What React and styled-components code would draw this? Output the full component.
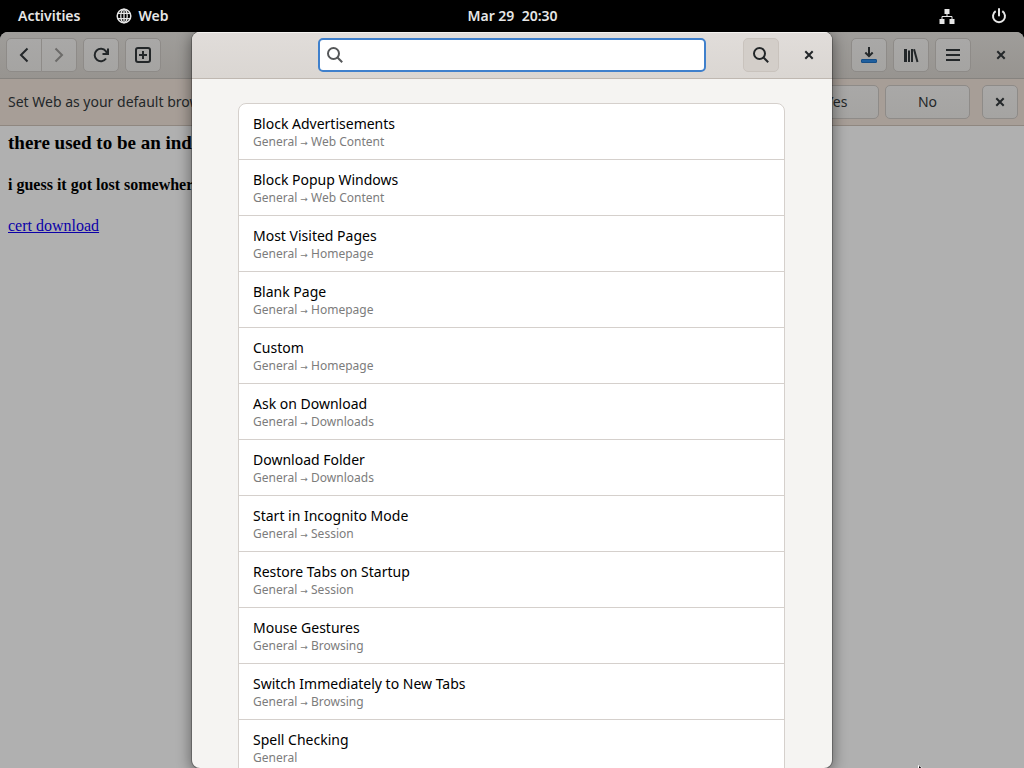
import React, { useState } from 'react';
import styled, { createGlobalStyle, css } from 'styled-components';

const colors = {
  panel: '#000',
  panelText: '#e6e6e6',
  page: '#b0b0b0',
  chromeBorder: '#86837f',
  chromeIcon: '#232729',
  infobar: '#a79e97',
  infobarBorder: '#8f8780',
  dialog: '#f5f4f2',
  dialogBorder: '#bfb8b1',
  rowBorder: '#d5d0cc',
  focus: '#3f80cc',
  link: '#0b00a8',
};

const results = [
  { title: 'Block Advertisements', path: ['General', 'Web Content'] },
  { title: 'Block Popup Windows', path: ['General', 'Web Content'] },
  { title: 'Most Visited Pages', path: ['General', 'Homepage'] },
  { title: 'Blank Page', path: ['General', 'Homepage'] },
  { title: 'Custom', path: ['General', 'Homepage'] },
  { title: 'Ask on Download', path: ['General', 'Downloads'] },
  { title: 'Download Folder', path: ['General', 'Downloads'] },
  { title: 'Start in Incognito Mode', path: ['General', 'Session'] },
  { title: 'Restore Tabs on Startup', path: ['General', 'Session'] },
  { title: 'Mouse Gestures', path: ['General', 'Browsing'] },
  { title: 'Switch Immediately to New Tabs', path: ['General', 'Browsing'] },
  { title: 'Spell Checking', path: ['General'] },
];

const GlobalStyle = createGlobalStyle`
  * {
    box-sizing: border-box;
  }

  body {
    margin: 0;
    background: ${colors.panel};
    font-family: 'Noto Sans', sans-serif;
    font-size: 14px;
    line-height: 18px;
  }

  button {
    font: inherit;
  }
`;

const Desktop = styled.div`
  position: relative;
  display: flex;
  flex-direction: column;
  height: 100vh;
  overflow: hidden;
`;

const TopPanel = styled.header`
  display: grid;
  grid-template-columns: 1fr auto 1fr;
  align-items: center;
  height: 32px;
  flex: none;
  padding: 0 17px 0 18px;
  background: ${colors.panel};
  color: ${colors.panelText};
`;

const PanelGroup = styled.div`
  display: flex;
  align-items: center;
  justify-content: ${({ $end }) => ($end ? 'flex-end' : 'flex-start')};
  gap: 36px;
`;

const PanelButton = styled.button`
  display: flex;
  align-items: center;
  gap: 6px;
  padding: 0;
  border: 0;
  background: none;
  color: inherit;
  font-weight: 600;
`;

const BrowserWindow = styled.div`
  position: relative;
  display: flex;
  flex: 1;
  flex-direction: column;
  min-height: 0;
  border-radius: 8px 8px 0 0;
  overflow: hidden;
  background: ${colors.page};
`;

const HeaderBar = styled.div`
  display: flex;
  align-items: center;
  gap: 6px;
  height: 47px;
  flex: none;
  padding: 0 5px 0 6px;
  border-bottom: 1px solid ${colors.chromeBorder};
  background: linear-gradient(#9f9d9a, #979490);
`;

const chromeButton = css`
  display: flex;
  align-items: center;
  justify-content: center;
  height: 34px;
  padding: 0;
  border: 1px solid #8e8b88;
  border-radius: 5px;
  background: linear-gradient(#a9a8a7, #a5a4a2);
  color: ${colors.chromeIcon};
`;

const ChromeButton = styled.button`
  ${chromeButton}
  width: ${({ $wide }) => ($wide ? '85px' : '36px')};

  &:disabled {
    color: #6c6b69;
  }
`;

const LinkedButtons = styled.div`
  display: flex;

  ${ChromeButton}:first-child {
    border-radius: 5px 0 0 5px;
  }

  ${ChromeButton}:last-child {
    border-left: 0;
    border-radius: 0 5px 5px 0;
    width: 35px;
  }
`;

const AddressSpace = styled.div`
  flex: 1;
`;

const WindowActions = styled.div`
  display: flex;
  gap: ${({ $gap }) => $gap};
`;

const FlatButton = styled.button`
  display: flex;
  align-items: center;
  justify-content: center;
  width: 36px;
  height: 34px;
  padding: 0;
  border: 0;
  background: none;
  color: ${colors.chromeIcon};
`;

const InfoBar = styled.div`
  display: flex;
  align-items: center;
  gap: 6px;
  height: 47px;
  flex: none;
  padding: 0 6px 0 8px;
  border-bottom: 1px solid ${colors.infobarBorder};
  background: ${colors.infobar};
  color: ${colors.chromeIcon};
`;

const InfoText = styled.span`
  flex: 1;
`;

const InfoClose = styled.div`
  padding-left: 6px;
`;

const WebPage = styled.main`
  padding: 0 8px;
  color: #000;
  font-family: 'Liberation Serif', serif;
  font-size: 16px;
`;

const PageHeading = styled.h3`
  margin: 6px 0 21px;
  font-size: 19px;
  line-height: 22px;
`;

const PageSubheading = styled.h4`
  margin: 0 0 22px;
  font-size: 16px;
  line-height: 20px;
`;

const PageLink = styled.a`
  color: ${colors.link};
`;

const Dialog = styled.section`
  position: absolute;
  inset: 0;
  display: flex;
  flex-direction: column;
  max-width: 640px;
  margin: 0 auto;
  border-radius: 8px;
  overflow: hidden;
  background: ${colors.dialog};
  box-shadow: 0 0 0 1px rgba(0, 0, 0, 0.25), 0 3px 14px 2px rgba(0, 0, 0, 0.4);
`;

const DialogHeader = styled.div`
  display: grid;
  grid-template-columns: 1fr minmax(0, 388px) 1fr;
  align-items: center;
  height: 47px;
  flex: none;
  border-bottom: 1px solid ${colors.dialogBorder};
  background: linear-gradient(#e1ddda, #dad6d2);
  box-shadow: inset 0 1px #f4f2f0;
`;

const SearchEntry = styled.label`
  display: flex;
  grid-column: 2;
  align-items: center;
  gap: 8px;
  height: 34px;
  padding: 0 7px;
  border: 2px solid ${colors.focus};
  border-radius: 5px;
  background: #fff;
  color: #555759;
`;

const SearchInput = styled.input`
  flex: 1;
  min-width: 0;
  padding: 0;
  border: 0;
  outline: 0;
  background: none;
  font: inherit;
`;

const DialogActions = styled.div`
  display: flex;
  justify-content: flex-end;
  gap: 12px;
  padding-right: 5px;
`;

const SearchToggle = styled.button`
  ${chromeButton}
  width: 36px;
  border-color: #c9c3bd;
  background: #d3cec9;
`;

const ResultsArea = styled.div`
  padding: 24px 47px 24px 46px;
`;

const ResultList = styled.ul`
  margin: 0;
  padding: 0;
  border: 1px solid ${colors.rowBorder};
  border-radius: 8px;
  background: #fff;
  list-style: none;
`;

const ResultRow = styled.li`
  display: flex;
  flex-direction: column;
  justify-content: center;
  height: 56px;
  padding: 0 14px;
  border-bottom: 1px solid ${colors.rowBorder};
`;

const ResultTitle = styled.span`
  color: #000;
  line-height: 20px;
`;

const ResultPath = styled.span`
  color: #7c7c7c;
  font-size: 12px;
  line-height: 16px;
`;

const PathArrow = styled.span`
  font-family: 'DejaVu Sans', sans-serif;
  font-size: 9px;
  line-height: 1;
`;

const Pointer = styled.svg`
  position: absolute;
  bottom: 0;
  left: 918px;
`;

const Icon = ({ width = 2, children }) => (
  <svg
    width="16"
    height="16"
    viewBox="0 0 16 16"
    fill="none"
    stroke="currentColor"
    strokeWidth={width}
    aria-hidden="true"
  >
    {children}
  </svg>
);

const GlobeIcon = () => (
  <Icon width={1.3}>
    <circle cx="8" cy="8" r="6.8" strokeWidth="1.5" />
    <ellipse cx="8" cy="8" rx="3.2" ry="6.8" />
    <path d="M8 1v14M2 5.3h12M2 10.7h12" />
  </Icon>
);

const NetworkIcon = () => (
  <Icon width={1}>
    <path d="M8 5v3M3 12V8.5h10V12" />
    <path d="M5.5 1h5v5h-5zM.5 11h5v5h-5zM10.5 11h5v5h-5z" fill="currentColor" stroke="none" />
  </Icon>
);

const PowerIcon = () => (
  <Icon>
    <path d="M4.7 3.2a6 6 0 1 0 6.6 0" />
    <path d="M8 1v6.5" strokeLinecap="round" />
  </Icon>
);

const BackIcon = () => (
  <Icon>
    <path d="M11.5 1.5 5 8l6.5 6.5" />
  </Icon>
);

const ForwardIcon = () => (
  <Icon>
    <path d="M4.5 1.5 11 8l-6.5 6.5" />
  </Icon>
);

const ReloadIcon = () => (
  <Icon>
    <path d="M13 11.5A6.2 6.2 0 1 1 12.8 4.2L14 6" />
    <path d="M16 1.5V8H9.5V6H14V1.5Z" fill="currentColor" stroke="none" />
  </Icon>
);

const NewTabIcon = () => (
  <Icon>
    <rect x="1" y="1" width="14" height="14" rx="2" />
    <path d="M8 4v8M4 8h8" />
  </Icon>
);

const DownloadIcon = () => (
  <Icon>
    <path d="M8 0v9M4.3 5.5 8 9.2l3.7-3.7" />
    <rect x="0.5" y="12.5" width="15" height="3" rx="0.5" fill="#1f5f9e" stroke="#174f87" strokeWidth="1" />
  </Icon>
);

const LibraryIcon = () => (
  <Icon>
    <path d="M2.5 2v13" strokeWidth="3" />
    <path d="M6 3.5V15M9 2v13" />
    <path d="M11 2.2 14.5 15" />
  </Icon>
);

const MenuIcon = () => (
  <Icon>
    <path d="M1 3h14M1 8h14M1 13h14" />
  </Icon>
);

const CloseIcon = () => (
  <Icon>
    <path d="m4.3 4.3 7.4 7.4M11.7 4.3l-7.4 7.4" />
  </Icon>
);

const SearchIcon = () => (
  <Icon>
    <circle cx="6.5" cy="6.5" r="5.5" />
    <path d="m10.5 10.5 4.7 4.7" />
  </Icon>
);

const PreferencesDialog = () => {
  const [query, setQuery] = useState('');
  const text = query.toLowerCase();
  const visible = results.filter(({ title }) => title.toLowerCase().includes(text));

  return (
    <Dialog role="dialog" aria-label="Preferences">
      <DialogHeader>
        <SearchEntry>
          <SearchIcon />
          <SearchInput
            type="text"
            aria-label="Search"
            value={query}
            onChange={e => setQuery(e.target.value)}
          />
        </SearchEntry>
        <DialogActions>
          <SearchToggle type="button" aria-label="Toggle search" aria-pressed="true">
            <SearchIcon />
          </SearchToggle>
          <FlatButton type="button" aria-label="Close preferences">
            <CloseIcon />
          </FlatButton>
        </DialogActions>
      </DialogHeader>
      <ResultsArea>
        <ResultList>
          {visible.map(({ title, path: [page, group] }) => (
            <ResultRow key={title}>
              <ResultTitle>{title}</ResultTitle>
              <ResultPath>
                {page}
                {group && (
                  <>
                    {' '}
                    <PathArrow>→</PathArrow> {group}
                  </>
                )}
              </ResultPath>
            </ResultRow>
          ))}
        </ResultList>
      </ResultsArea>
    </Dialog>
  );
};

const App = () => (
  <>
    <GlobalStyle />
    <Desktop>
      <TopPanel>
        <PanelGroup>
          <PanelButton type="button">Activities</PanelButton>
          <PanelButton type="button">
            <GlobeIcon />
            Web
          </PanelButton>
        </PanelGroup>
        <PanelButton type="button">Mar 29&nbsp; 20:30</PanelButton>
        <PanelGroup $end>
          <PanelButton type="button" aria-label="Network">
            <NetworkIcon />
          </PanelButton>
          <PanelButton type="button" aria-label="Power">
            <PowerIcon />
          </PanelButton>
        </PanelGroup>
      </TopPanel>
      <BrowserWindow>
        <HeaderBar>
          <LinkedButtons>
            <ChromeButton type="button" aria-label="Back">
              <BackIcon />
            </ChromeButton>
            <ChromeButton type="button" aria-label="Forward" disabled>
              <ForwardIcon />
            </ChromeButton>
          </LinkedButtons>
          <ChromeButton type="button" aria-label="Reload">
            <ReloadIcon />
          </ChromeButton>
          <ChromeButton type="button" aria-label="New tab">
            <NewTabIcon />
          </ChromeButton>
          <AddressSpace />
          <WindowActions $gap="12px">
            <WindowActions $gap="6px">
              <ChromeButton type="button" aria-label="Downloads">
                <DownloadIcon />
              </ChromeButton>
              <ChromeButton type="button" aria-label="Library">
                <LibraryIcon />
              </ChromeButton>
              <ChromeButton type="button" aria-label="Menu">
                <MenuIcon />
              </ChromeButton>
            </WindowActions>
            <FlatButton type="button" aria-label="Close window">
              <CloseIcon />
            </FlatButton>
          </WindowActions>
        </HeaderBar>
        <InfoBar>
          <InfoText>Set Web as your default browser?</InfoText>
          <ChromeButton type="button" $wide>
            Yes
          </ChromeButton>
          <ChromeButton type="button" $wide>
            No
          </ChromeButton>
          <InfoClose>
            <ChromeButton type="button" aria-label="Dismiss">
              <CloseIcon />
            </ChromeButton>
          </InfoClose>
        </InfoBar>
        <WebPage>
          <PageHeading>there used to be an index here</PageHeading>
          <PageSubheading>i guess it got lost somewhere</PageSubheading>
          <PageLink href="#cert">cert download</PageLink>
        </WebPage>
        <PreferencesDialog />
      </BrowserWindow>
      <Pointer width="5" height="3" viewBox="0 0 5 3" aria-hidden="true">
        <path d="M0 0 4.5 3H0z" fill="#fff" />
        <path d="M1 1 3.5 3H1z" fill="#000" />
      </Pointer>
    </Desktop>
  </>
);

export default App;
